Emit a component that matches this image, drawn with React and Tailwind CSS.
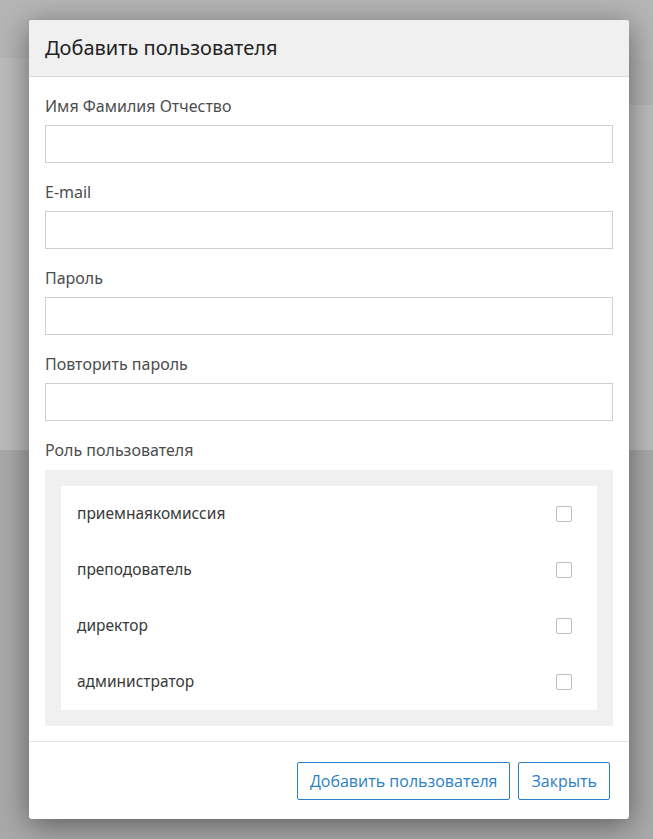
import { useState } from 'react'

const ROLES = ['приемнаякомиссия', 'преподователь', 'директор', 'администратор']
const FIELDS = [
  { label: 'Имя Фамилия Отчество', type: 'text' },
  { label: 'E-mail', type: 'email' },
  { label: 'Пароль', type: 'password' },
  { label: 'Повторить пароль', type: 'password' },
]

function Field({ label, type }) {
  return (
    <div className="flex flex-col">
      <label className="h-[20px] text-[16px] leading-[20px] text-[#4d4d4d]">{label}</label>
      <input
        type={type}
        className="mt-[9px] mb-[19px] h-[38px] w-full border border-[#cfcfcf] bg-white px-3 text-[15px] outline-none"
      />
    </div>
  )
}

export default function App() {
  const [roles, setRoles] = useState({})
  const toggle = (r) => setRoles((s) => ({ ...s, [r]: !s[r] }))

  return (
    <div
      className="relative h-[839px] w-full overflow-hidden bg-[#a9a9a9]"
      style={{ fontFamily: '"Noto Sans", "Open Sans", sans-serif' }}
    >
      {/* page behind the overlay */}
      <div className="h-[58px] bg-[#b5b5b5]" />
      <div className="flex h-[392px]">
        <div className="w-[330px] bg-[#bbbbbb]" />
        <div className="flex-1 flex flex-col">
          <div className="h-[47px] bg-[#b3b3b3]" />
          <div className="flex-1 bg-[#bcbcbc]" />
        </div>
      </div>

      {/* modal */}
      <div className="absolute left-[29px] top-[20px] w-[600px] rounded-[3px] bg-white shadow-[0_6px_30px_rgba(0,0,0,0.45)]">
        <div className="flex h-[57px] items-center rounded-t-[3px] border-b border-[#dcdcdc] bg-[#f0f0f0] px-4">
          <h2 className="text-[20px] text-[#222]">Добавить пользователя</h2>
        </div>

        <div className="px-4 pt-[19px] pb-[15px]">
          {FIELDS.map((f) => (
            <Field key={f.label} {...f} />
          ))}
          <div className="h-[20px] text-[16px] leading-[20px] text-[#4d4d4d]">Роль пользователя</div>
          <div className="mt-[10px] bg-[#f0f0f0] p-4">
            <div className="bg-white">
              {ROLES.map((r) => (
                <label
                  key={r}
                  className="flex h-[56px] cursor-pointer items-center justify-between pl-4 pr-[25px]"
                >
                  <span className="text-[15.5px] text-[#3a3a3a]">{r}</span>
                  <span
                    onClick={() => toggle(r)}
                    className={`block h-[16px] w-[16px] rounded-[2px] border ${
                      roles[r] ? 'border-[#2b7fc6] bg-[#2b7fc6]' : 'border-[#bdbdbd] bg-white'
                    }`}
                  />
                </label>
              ))}
            </div>
          </div>
        </div>

        <div className="flex justify-end gap-2 border-t border-[#e3e3e3] px-[19px] pt-5 pb-[19px]">
          <button
            className="h-[38px] rounded-[2px] border border-[#2b7fc6] bg-white px-[12px] text-[16px] text-[#2b7fc6]"
            style={{ fontFamily: '"Open Sans", sans-serif' }}
          >
            Добавить пользователя
          </button>
          <button
            className="h-[38px] rounded-[2px] border border-[#2b7fc6] bg-white px-[12px] text-[16px] text-[#2b7fc6]"
            style={{ fontFamily: '"Open Sans", sans-serif' }}
          >
            Закрыть
          </button>
        </div>
      </div>
    </div>
  )
}
